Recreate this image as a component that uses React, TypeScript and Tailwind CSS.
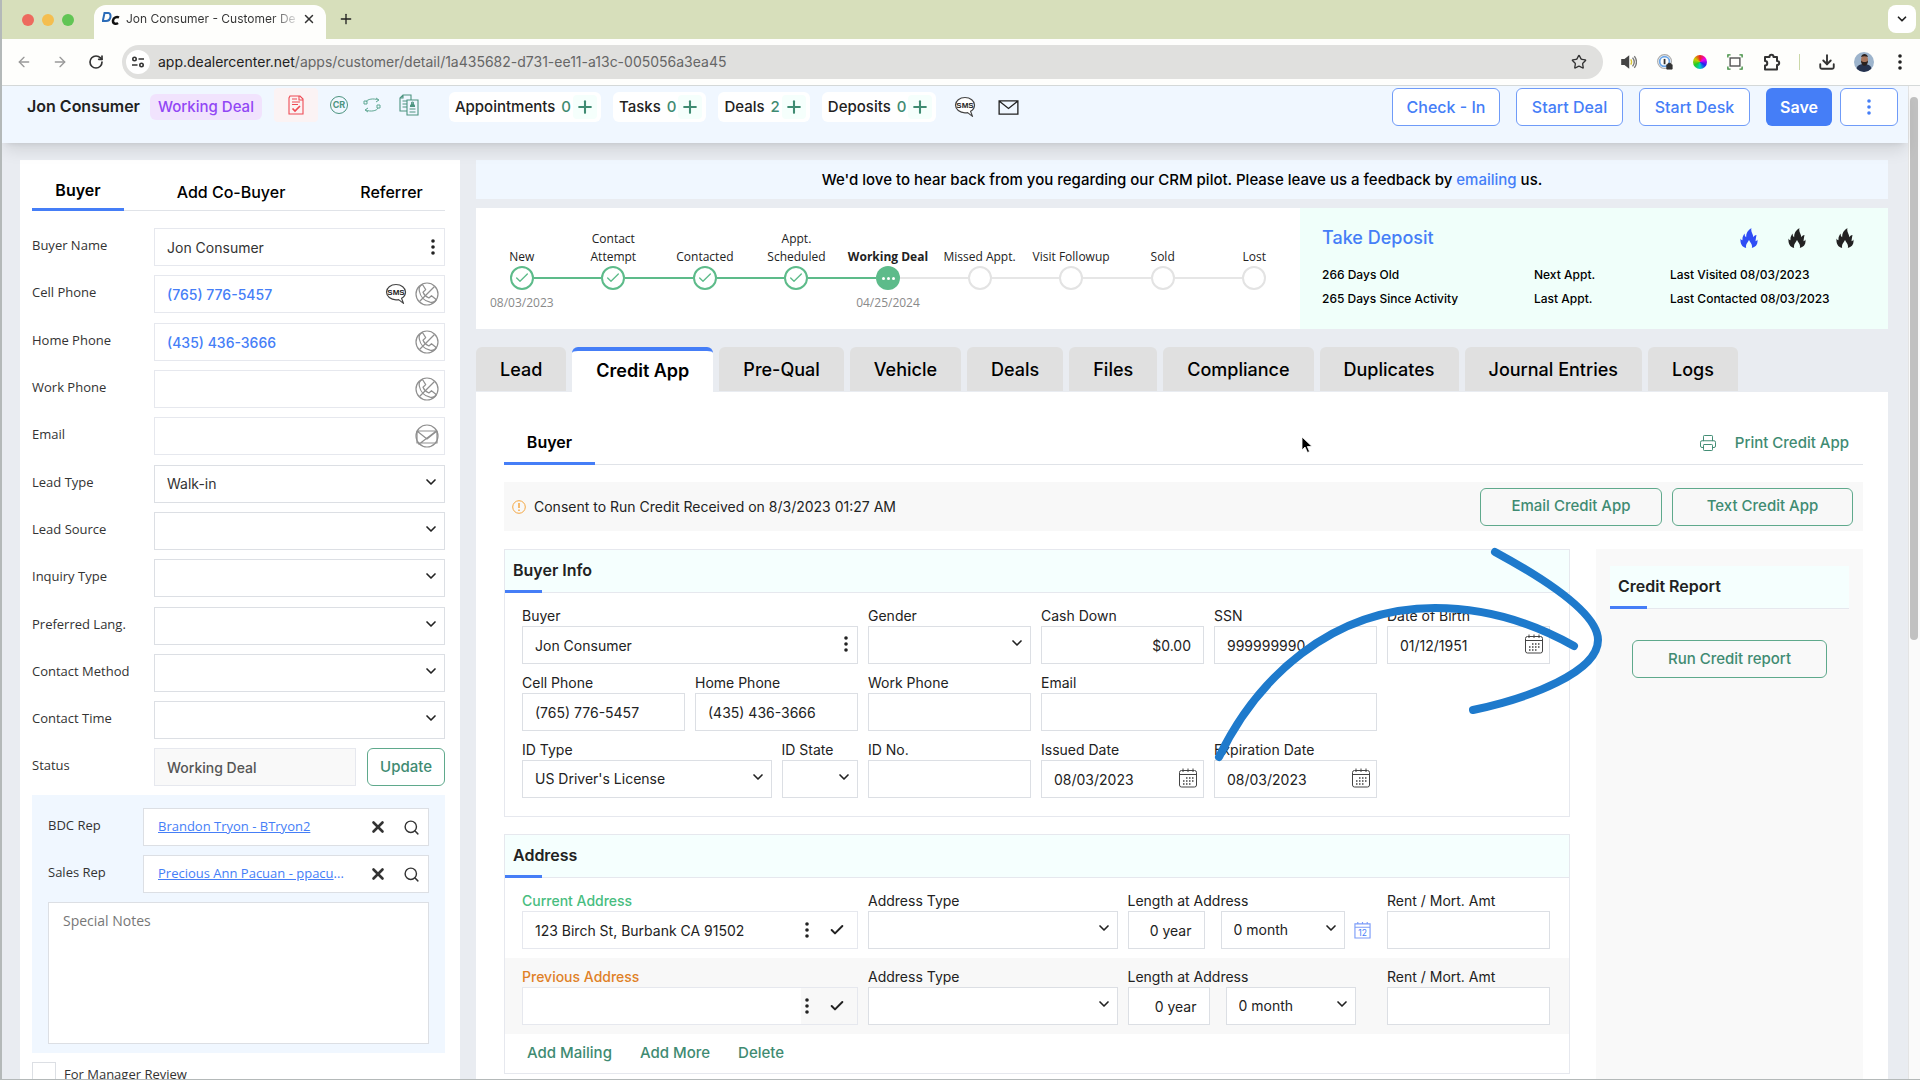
import React from 'react'
import { ArrowLeft, ArrowRight, Check, ChevronDown, Download, Plus, Printer, RotateCw, Search, Star, X } from 'lucide-react'

const iconBtn = 'flex items-center justify-center'

const Dots = ({ className = 'text-[#222]' }: { className?: string }) => (
  <svg viewBox="0 0 4 16" className={`h-4 w-1 ${className}`} fill="currentColor">
    <circle cx="2" cy="2" r="1.8" />
    <circle cx="2" cy="8" r="1.8" />
    <circle cx="2" cy="14" r="1.8" />
  </svg>
)

const SmsIcon = () => (
  <svg viewBox="0 0 22 22" className="h-[22px] w-[22px]">
    <path d="M11 1.5c5.3 0 9.5 3.3 9.5 7.6 0 2.7-1.5 5-3.9 6.3l1.9 5-4.9-3.8c-.8.2-1.7.2-2.6.2-5.300 0-9.500-3.400-9.500-7.700S5.700 1.500 11 1.500Z" fill="#fff" stroke="#444" strokeWidth="1.2" strokeLinejoin="round" />
    <text x="11" y="12" textAnchor="middle" fontSize="8" fontWeight="700" fill="#222" fontFamily="Liberation Sans, sans-serif">SMS</text>
  </svg>
)

const NoPhone = () => (
  <svg viewBox="0 0 24 24" className="h-6 w-6" fill="none" stroke="#8f8f8f" strokeWidth="1.2">
    <circle cx="12" cy="12" r="11" />
    <path d="M7.5 2.500c-2.500 1-3.800 3.200-3.200 6.500C5.300 14.500 9.500 19 15 20.200c3.300.6 5.500-.7 6.200-2.700l-4.700-3.800-2.600 2.300c-2.600-1-4.800-3.200-5.900-5.800l2.700-2.600-3.200-5.100Z" strokeLinejoin="round" />
    <path d="M19.500 4.500 4.500 19.500" />
  </svg>
)

const NoMail = () => (
  <svg viewBox="0 0 24 24" className="h-6 w-6" fill="none" stroke="#8f8f8f" strokeWidth="1.2">
    <circle cx="12" cy="12" r="11" />
    <path d="M2 7h20v12H2zM2 7l10 8 10-8M3.500 20.500 20 8" strokeLinejoin="round" />
  </svg>
)

const Flame = ({ className = 'text-[#222]' }: { className?: string }) => (
  <svg viewBox="0 0 18 20" className={`h-5 w-[18px] ${className}`} fill="currentColor">
    <path d="M11.500 0C10 .8 5.800 3.800 6.200 9.200C5 8.500 4.500 7.500 4.800 5.500C3 7.500 2.200 9.500 2.500 12.200C1.500 12 1 11.500.5 10.500C.2 14.500 1 18.500 6.200 20C5.200 17 7.500 14.800 9 12C10.500 14.800 12.800 17 11.800 20C16 19 18.300 16 17.300 11.500C16.900 12.500 16.300 13 15.500 13.200C15.800 11 16 9 16.500 7C15 7.300 13.800 8 13.300 9.200C13.300 6 10.300 3.500 11.500 0Z" />
  </svg>
)

const CalendarIcon = () => (
  <svg viewBox="0 0 20 20" className="h-5 w-5" fill="none" stroke="#444">
    <rect x="1.500" y="2.500" width="17" height="16.500" rx="2" />
    <path d="M1.500 6.500h17M5 .5v3.500M10 .5v3.500M15 .5v3.500" />
    <path d="M8 10h8M5 13h11M5 16h8" strokeWidth="1.500" strokeDasharray="1.500 1.500" />
  </svg>
)

const Caret = () => (
  <ChevronDown className="pointer-events-none absolute right-1.5 top-[9px] h-4 w-4 text-[#222]" strokeWidth={2.5} />
)

type FieldProps = {
  id: string
  label: string
  span: string
  value?: string
  kind?: 'text' | 'select' | 'date' | 'dots'
  right?: boolean
}

const Field = ({ id, label, span, value = '', kind = 'text', right }: FieldProps) => (
  <div className={span}>
    <label htmlFor={id} className="block h-5 text-sm leading-5 whitespace-nowrap">{label}</label>
    <div className="relative">
      {kind === 'select' ? (
        <>
          <select id={id} className="h-[38px] w-full appearance-none border border-[#dcdfe4] bg-white px-3 text-sm">
            <option>{value}</option>
          </select>
          <Caret />
        </>
      ) : (
        <input id={id} defaultValue={value} className={`h-[38px] w-full border border-[#dcdfe4] bg-white px-3 text-sm ${right ? 'text-right' : ''}`} />
      )}
      {kind === 'date' && <button aria-label={`Pick ${label}`} className="absolute right-1.5 top-2"><CalendarIcon /></button>}
      {kind === 'dots' && <button aria-label="Buyer options" className="absolute right-2.5 top-2.5"><Dots /></button>}
    </div>
  </div>
)

type SideRowProps = {
  id: string
  label: string
  value?: string
  link?: boolean
  select?: boolean
  children?: React.ReactNode
}

const sideLabel = "w-[122px] shrink-0 pt-[7px] font-['Open_Sans',sans-serif] text-[13px] leading-5"

const SideRow = ({ id, label, value = '', link, select, children }: SideRowProps) => (
  <div className="flex">
    <label htmlFor={id} className={sideLabel}>{label}</label>
    <div className="relative flex-1">
      {select ? (
        <>
          <select id={id} className="h-[38px] w-full appearance-none border border-[#dcdfe4] bg-white px-3 text-sm">
            <option>{value}</option>
          </select>
          <Caret />
        </>
      ) : (
        <input id={id} defaultValue={value} className={`h-[38px] w-full border border-[#e6e8ee] bg-white px-3 text-sm ${link ? 'font-medium text-[#457ef7]' : ''}`} />
      )}
      <div className="absolute right-1.5 top-[7px] flex items-center gap-2">{children}</div>
    </div>
  </div>
)

const Rep = ({ label, name, more }: { label: string, name: string, more?: string }) => (
  <div className="flex font-['Open_Sans',sans-serif] text-[13px]">
    <span className="w-[95px] shrink-0 pt-[7px] leading-5">{label}</span>
    <div className="flex h-[38px] min-w-0 flex-1 items-center border border-[#dcdfe4] bg-white pr-2 pl-3.5">
      <span className="whitespace-nowrap text-[#457ef7]"><a href="#" className="underline">{name}</a>{more}</span>
      <button aria-label={`Clear ${label}`} className="ml-auto"><X className="h-[18px] w-[18px]" strokeWidth={3.5} /></button>
      <button aria-label={`Search ${label}`} className="ml-4"><Search className="h-[17px] w-[17px]" /></button>
    </div>
  </div>
)

const CardTitle = ({ children }: { children: React.ReactNode }) => (
  <div className="relative h-[43px] border-b border-[#e6e8ee] bg-[#f5fffe] px-2">
    <h2 className="pt-2 text-base leading-6 font-semibold">{children}</h2>
    <div className="absolute -bottom-px left-0 h-[3px] w-[37px] bg-[#457ef7]" />
  </div>
)

const steps = [
  { name: 'New', date: '08/03/2023', state: 'done' },
  { name: 'Contact Attempt', wrap: true, state: 'done' },
  { name: 'Contacted', state: 'done' },
  { name: 'Appt. Scheduled', wrap: true, state: 'done' },
  { name: 'Working Deal', date: '04/25/2024', state: 'now' },
  { name: 'Missed Appt.', state: 'todo' },
  { name: 'Visit Followup', state: 'todo' },
  { name: 'Sold', state: 'todo' },
  { name: 'Lost', state: 'todo' },
]

const Stepper = () => (
  <ol className="grid grid-cols-9 bg-white pt-[22px] text-center font-['Open_Sans',sans-serif] text-xs leading-[18px]">
    {steps.map((s, i) => (
      <li key={s.name} className="flex flex-col items-center">
        <div className={`flex h-9 items-end justify-center ${s.wrap ? 'w-16' : 'whitespace-nowrap'} ${s.state === 'now' ? 'font-bold' : ''}`}>{s.name}</div>
        <div className="flex w-full items-center">
          <div className={`h-0.5 flex-1 ${i === 0 ? 'bg-transparent' : i < 5 ? 'bg-[#5dbb8a]' : 'bg-[#e6e6e6]'}`} />
          {s.state === 'done' && <div className="flex h-6 w-6 items-center justify-center rounded-full border-2 border-[#5dbb8a]"><Check className="h-4 w-4 text-[#5dbb8a]" /></div>}
          {s.state === 'now' && (
            <div className="flex h-6 w-6 items-center justify-center gap-0.5 rounded-full bg-[#5dbb8a]">
              <i className="h-[3px] w-[3px] rounded-full bg-white" />
              <i className="h-[3px] w-[3px] rounded-full bg-white" />
              <i className="h-[3px] w-[3px] rounded-full bg-white" />
            </div>
          )}
          {s.state === 'todo' && <div className="h-6 w-6 rounded-full border-2 border-[#e3e3e3]" />}
          <div className={`h-0.5 flex-1 ${i === 8 ? 'bg-transparent' : i < 4 ? 'bg-[#5dbb8a]' : 'bg-[#e6e6e6]'}`} />
        </div>
        <div className="pt-1 text-[#8a8a8a]">{s.date}</div>
      </li>
    ))}
  </ol>
)

const Browser = () => (
  <>
    <div className="flex h-[39px] shrink-0 items-end bg-[#d7dfbb]">
      <div className="flex items-center gap-2 self-center pl-5">
        <i className="h-3 w-3 rounded-full bg-[#ed6a5e]" />
        <i className="h-3 w-3 rounded-full bg-[#f4be4f]" />
        <i className="h-3 w-3 rounded-full bg-[#61c554]" />
      </div>
      <div className="ml-5 flex h-[34px] w-[232px] items-center rounded-t-xl bg-[#fefefc] pr-2.5 pb-1.5 pl-2 text-[#333]">
        <svg viewBox="0 0 18 14" className="h-3.5 w-[18px] shrink-0">
          <path d="M2.500 1h4c3 0 3 8-2.500 8H.8Z" fill="none" stroke="#2b6cb8" strokeWidth="2" />
          <path d="M17 5.500c-2-1-5.500-.5-6 3-.3 3.500 3 4 5 2.500" fill="none" stroke="#111" strokeWidth="2.5" />
        </svg>
        <span className="ml-1.5 bg-linear-to-r from-[#333] from-85% to-[#ddd] bg-clip-text text-xs whitespace-nowrap text-transparent">Jon Consumer - Customer De</span>
        <button aria-label="Close tab" className="ml-auto"><X className="h-3.5 w-3.5" strokeWidth={2.5} /></button>
      </div>
      <button aria-label="New tab" className="mb-3 ml-3"><Plus className="h-4 w-4" /></button>
      <button aria-label="Search tabs" className={`${iconBtn} mr-1 mb-1.5 ml-auto h-7 w-7 rounded-lg bg-white`}><ChevronDown className="h-3.5 w-3.5" strokeWidth={3} /></button>
    </div>
    <div className="flex h-[47px] shrink-0 items-center border-b border-[#d5d9d9] bg-[#fefefc] pr-[18px] pl-3.5 text-[#333]">
      <button aria-label="Back" className="mr-5"><ArrowLeft className="h-4 w-4 text-[#999]" /></button>
      <button aria-label="Forward" className="mr-5"><ArrowRight className="h-4 w-4 text-[#999]" /></button>
      <button aria-label="Reload"><RotateCw className="h-4 w-4" strokeWidth={2.5} /></button>
      <div className="ml-[18px] flex h-[34px] flex-1 items-center rounded-full bg-[#e0e0de] pr-4 pl-1">
        <button aria-label="Site information" className={`${iconBtn} h-6 w-6 rounded-full bg-white`}>
          <svg viewBox="0 0 14 14" className="h-3.5 w-3.5" fill="none" stroke="#333" strokeWidth="1.6">
            <circle cx="3.500" cy="4" r="1.7" />
            <path d="M7.500 4H13M1 10h5.500" />
            <circle cx="10.500" cy="10" r="1.7" />
          </svg>
        </button>
        <div role="textbox" aria-label="Address" className="ml-2 text-sm text-[#666]"><span className="text-[#222]">app.dealercenter.net</span>/apps/customer/detail/1a435682-d731-ee11-a13c-005056a3ea45</div>
        <button aria-label="Bookmark" className="ml-auto"><Star className="h-4 w-4" /></button>
      </div>
      <div className="ml-[18px] flex items-center gap-5">
        <svg viewBox="0 0 18 18" className="h-4 w-4" fill="none" stroke="#777" strokeWidth="1.5">
          <path d="M1 6.500h3L8.500 3v12L4 11.500H1z" fill="#444" stroke="#444" />
          <path d="M11 6c1.300 2 1.300 4 0 6" stroke="#d8c43a" />
          <path d="M13 4c2.300 3 2.300 7 0 10M15 2.500c3 4 3 9 0 13" />
        </svg>
        <svg viewBox="0 0 18 18" className="h-4 w-4" fill="none">
          <circle cx="8.500" cy="8.500" r="7.8" stroke="#aaa" strokeWidth="1.2" />
          <circle cx="8.500" cy="8.500" r="5.5" stroke="#6aa5e8" strokeWidth="2" />
          <path d="M8.500 5.500v6" stroke="#333" strokeWidth="2" />
          <path d="M11 12h6v5h-6zM12.500 12v-1.500h3V12" fill="#333" stroke="#333" />
        </svg>
        <i className="h-3.5 w-3.5 rounded-full bg-[conic-gradient(#e22,#e0e,#22e,#0cc,#2c2,#cc0,#e22)]" />
        <svg viewBox="0 0 18 18" className="h-4 w-4" fill="none">
          <rect x="3.500" y="4.500" width="11" height="9" stroke="#555" strokeWidth="1.6" />
          <path d="M1 4V1h3M14 1h3v3M17 14v3h-3M4 17H1v-3" stroke="#3a8a3a" strokeWidth="1.5" />
        </svg>
        <svg viewBox="0 0 18 18" className="h-[18px] w-[18px]" fill="none" stroke="#333" strokeWidth="2" strokeLinejoin="round">
          <path d="M2 4h4.500c0-3 4-3 4 0H14v4c3 0 3 4 0 4v4.500H2V12.500c3 0 3-4.500 0-4.500z" />
        </svg>
      </div>
      <div className="ml-[18px] flex items-center gap-[18px]">
        <i className="h-4 w-px bg-[#cbd8a8]" />
        <Download className="h-[18px] w-[18px]" strokeWidth={2.5} />
        <svg viewBox="0 0 20 20" className="h-5 w-5">
          <clipPath id="face"><circle cx="10" cy="10" r="10" /></clipPath>
          <g clipPath="url(#face)">
            <rect width="20" height="20" fill="#9db4cc" />
            <path d="M2 20c0-6 3-8 8-8s8 2 8 8z" fill="#26324d" />
            <ellipse cx="10.500" cy="8" rx="3.500" ry="5" fill="#a9765c" />
            <path d="M7 8.500c0 7 7 7 7 0-2 2-5 2-7 0ZM7 5c1-4 6-4 7 0-2-1-5-1-7 0Z" fill="#2b211e" />
          </g>
        </svg>
        <button aria-label="Browser menu" className="ml-1.5"><Dots /></button>
      </div>
    </div>
  </>
)

const counters = [
  ['Appointments', '0'],
  ['Tasks', '0'],
  ['Deals', '2'],
  ['Deposits', '0'],
]

const outline = 'h-[38px] rounded-md border border-[#6f9bf8] bg-white text-base font-medium text-[#457ef7]'

const Header = () => (
  <header className="z-10 flex h-[57px] shrink-0 items-start bg-[#f0f7ff] pr-2.5 pl-[25px] shadow-lg">
    <h1 className="mt-2 text-base leading-6 font-semibold whitespace-nowrap">Jon Consumer</h1>
    <span className="mt-2 ml-2.5 rounded-md bg-[#f1e3fd] px-2 text-[15px] leading-[26px] font-medium whitespace-nowrap text-[#9147f5]">Working Deal</span>
    <div className="mt-0.5 ml-3 flex items-center">
      <button aria-label="Checklist" className={`${iconBtn} h-[34px] w-11 rounded bg-[#fbf3f4]`}>
        <svg viewBox="0 0 16 20" className="h-5 w-4" fill="none" stroke="#ee4b55" strokeWidth="1.1">
          <path d="M2 1h10l3 3v15H1V3zM11 1v4h4M4 4h5M4 7h8M4 9.500h6" />
          <path d="m4.500 13.500 2.500 2.500 5-5" strokeWidth="1.7" />
        </svg>
      </button>
      <button aria-label="Credit report" className={`${iconBtn} ml-3 h-[18px] w-[18px] rounded-full border border-[#4c9480] text-[9px] font-bold text-[#4c9480]`}>CR</button>
      <button aria-label="Transfer" className="ml-[15px]">
        <svg viewBox="0 0 18 18" className="h-[18px] w-[18px]" fill="none" stroke="#5fa793">
          <path d="M3 6c1-3 8-4 12-2M13 2l3 2-3 2M15 12c-1 3-8 4-12 2M5 12l-3 2 3 2" />
          <path d="M1 5h3v3H1zM14 9h3v3h-3z" />
        </svg>
      </button>
      <button aria-label="Documents" className="ml-[18px]">
        <svg viewBox="0 0 20 22" className="h-[22px] w-5" fill="none" stroke="#4c9480" strokeWidth="1.1">
          <path d="M8 17H1V4l3-3h8v5M4 1v3H1M3.500 7H8M3.500 10H8M3.500 13H8" />
          <path d="M8 6h11v15H8zM10.500 15h6M10.500 18h6" />
          <path d="M11.500 12.500c0-3 4-3 4 0z" fill="#4c9480" />
          <circle cx="13.500" cy="9" r="1" />
        </svg>
      </button>
    </div>
    <div className="mt-1.5 ml-[30px] flex items-center gap-3">
      {counters.map(([name, n]) => (
        <div key={name} className="flex h-[30px] items-center rounded-md bg-white pr-1 pl-1.5 text-[15px] font-medium">
          {name}<span className="ml-1.5 text-[#3f8b72]">{n}</span>
          <button aria-label={`Add ${name}`} className="ml-0.5 flex h-6 w-6 items-center justify-center rounded bg-[#f5fffc]"><Plus className="h-5 w-5 text-[#3f8b72]" strokeWidth={2.5} /></button>
        </div>
      ))}
      <button aria-label="Send SMS" className="ml-1.5"><SmsIcon /></button>
      <button aria-label="Send mail" className="ml-2.5">
        <svg viewBox="0 0 22 16" className="h-[15px] w-[21px]" fill="none" stroke="#222" strokeWidth="1.4"><path d="M1 1h20v14H1zM1 1l10 8L21 1" /></svg>
      </button>
    </div>
    <div className="mt-0.5 ml-auto flex">
      <button className={`${outline} w-[108px]`}>Check - In</button>
      <button className={`${outline} ml-4 w-[107px]`}>Start Deal</button>
      <button className={`${outline} ml-4 w-[111px]`}>Start Desk</button>
      <button className="ml-4 h-[38px] w-[66px] rounded-md bg-[#457ef7] text-base font-semibold text-white">Save</button>
      <button aria-label="More actions" className={`${outline} ml-2 flex w-[58px] items-center justify-center`}><Dots className="text-[#457ef7]" /></button>
    </div>
  </header>
)

const Sidebar = () => (
  <aside className="w-[440px] shrink-0 bg-white pt-3.5 pr-[15px] pl-3 text-[#333]">
    <nav className="flex h-[37px] border-b border-[#e0e3e8] text-base font-medium text-black">
      <button className="-mb-px w-[92px] border-b-[3px] border-[#457ef7] pb-0.5 font-semibold">Buyer</button>
      <button className="w-[214px]">Add Co-Buyer</button>
      <button className="flex-1">Referrer</button>
    </nav>
    <div className="flex flex-col gap-[9px] pt-[17px]">
      <SideRow id="s-name" label="Buyer Name" value="Jon Consumer"><button aria-label="Name options" className="mt-1 mr-1"><Dots /></button></SideRow>
      <SideRow id="s-cell" label="Cell Phone" value="(765) 776-5457" link><SmsIcon /><NoPhone /></SideRow>
    </div>
    <div className="flex flex-col gap-[9px] pt-2.5">
      <SideRow id="s-home" label="Home Phone" value="(435) 436-3666" link><NoPhone /></SideRow>
      <SideRow id="s-work" label="Work Phone"><NoPhone /></SideRow>
      <SideRow id="s-email" label="Email"><NoMail /></SideRow>
    </div>
    <div className="flex flex-col gap-[9px] pt-2.5">
      <SideRow id="s-type" label="Lead Type" value="Walk-in" select />
      <SideRow id="s-source" label="Lead Source" select />
      <SideRow id="s-inq" label="Inquiry Type" select />
    </div>
    <div className="flex flex-col gap-[9px] pt-2.5">
      <SideRow id="s-lang" label="Preferred Lang." select />
      <SideRow id="s-method" label="Contact Method" select />
      <SideRow id="s-time" label="Contact Time" select />
      <div className="flex">
        <label htmlFor="s-status" className={sideLabel}>Status</label>
        <input id="s-status" readOnly defaultValue="Working Deal" className="h-[38px] min-w-0 flex-1 border border-[#e6e8ee] bg-[#f9f9f9] px-3 text-sm font-medium text-[#555]" />
        <button className="ml-[11px] h-[38px] w-[78px] rounded-md border border-[#5fa98c] text-[15px] font-medium text-[#3f8b72]">Update</button>
      </div>
    </div>
    <div className="mt-[9px] flex flex-col gap-[9px] bg-[#f0f7ff] px-4 pt-[13px] pb-[9px]">
      <Rep label="BDC Rep" name="Brandon Tryon - BTryon2" />
      <Rep label="Sales Rep" name="Precious Ann Pacuan - ppacu" more="..." />
      <textarea aria-label="Special Notes" placeholder="Special Notes" className="block h-[142px] resize-none border border-[#dcdfe4] bg-white px-3.5 py-2 font-['Open_Sans',sans-serif] text-sm placeholder:text-[#777]" />
    </div>
    <label className="mt-[9px] flex gap-2 font-['Open_Sans',sans-serif] text-[13px]">
      <input type="checkbox" className="h-6 w-6 appearance-none border border-[#dcdfe4]" />
      <span className="pt-0.5 leading-5">For Manager Review</span>
    </label>
  </aside>
)

const tabs = ['Lead', 'Credit App', 'Pre-Qual', 'Vehicle', 'Deals', 'Files', 'Compliance', 'Duplicates', 'Journal Entries', 'Logs']

const greenBtn = 'h-[38px] rounded-md border border-[#5fa98c] text-[15px] font-medium text-[#3f8b72]'

const AddressRow = ({ id, title, color, value, icon }: { id: string, title: string, color: string, value?: string, icon?: boolean }) => (
  <div className={`grid grid-cols-12 gap-x-2.5 pr-[19px] pl-[17px] ${icon ? 'h-[80px] pt-[13px]' : 'h-[76px] bg-[#f8f8f8] pt-[9px]'}`}>
    <div className="col-span-4">
      <label htmlFor={`${id}-addr`} className={`block h-5 text-sm leading-5 font-medium ${color}`}>{title}</label>
      <div className="flex h-[38px] items-center border border-[#e6e8ee]">
        <input id={`${id}-addr`} defaultValue={value} className="h-full min-w-0 flex-1 bg-white px-3 text-sm" />
        <button aria-label="Address options" className="px-1"><Dots /></button>
        <button aria-label="Verify address" className="mr-3 ml-4"><Check className="h-4 w-4" strokeWidth={3} /></button>
      </div>
    </div>
    <Field id={`${id}-type`} label="Address Type" span="col-span-3" kind="select" />
    <div className="col-span-3">
      <label htmlFor={`${id}-year`} className="block h-5 text-sm leading-5">Length at Address</label>
      <div className="flex items-center">
        <input id={`${id}-year`} defaultValue="0 year" className={`h-[38px] border border-[#dcdfe4] bg-white px-3 text-right text-sm ${icon ? 'w-[77px]' : 'w-[82px]'}`} />
        <div className={`relative ml-4 ${icon ? 'w-[124px]' : 'w-[130px]'}`}>
          <select aria-label="Months at address" className="h-[38px] w-full appearance-none border border-[#dcdfe4] bg-white px-3 text-sm"><option>0 month</option></select>
          <Caret />
        </div>
        {icon && (
          <button aria-label="Pick move-in date" className="ml-[9px]">
            <svg viewBox="0 0 18 18" className="h-[17px] w-[17px]" fill="none" stroke="#7c9cf8" strokeWidth="1.2">
              <path d="M1 2h16v15H1zM1 5.500h16M4 0v2M9 0v2M14 0v2" />
              <text x="9" y="14.500" textAnchor="middle" fontSize="9" fill="#457ef7" stroke="none">12</text>
            </svg>
          </button>
        )}
      </div>
    </div>
    <Field id={`${id}-rent`} label="Rent / Mort. Amt" span="col-span-2" />
  </div>
)

const CreditApp = () => (
  <section className="flex flex-1 flex-col bg-white pt-9 pr-[25px] pl-7 text-[#222]">
    <div className="flex h-[37px] border-b border-[#e0e3e8]">
      <button className="-mb-px w-[91px] border-b-[3px] border-[#457ef7] pb-1.5 text-base font-semibold text-black">Buyer</button>
      <button className="mr-3.5 mb-1.5 ml-auto flex items-center text-[15px] font-medium text-[#3f8b72]"><Printer className="mr-[18px] h-[18px] w-[18px]" strokeWidth={1.3} />Print Credit App</button>
    </div>
    <div className="mt-[17px] flex h-[49px] items-center bg-[#f8f8f8] pr-2.5 pl-2">
      <svg viewBox="0 0 14 14" className="h-3.5 w-3.5" fill="none" stroke="#f5a742"><circle cx="7" cy="7" r="6.3" /><path d="M7 3v5M7 9.500v1.500" strokeWidth="1.5" /></svg>
      <span className="ml-2 text-sm">Consent to Run Credit Received on 8/3/2023 01:27 AM</span>
      <button className={`${greenBtn} ml-auto w-[182px]`}>Email Credit App</button>
      <button className={`${greenBtn} ml-2.5 w-[181px]`}>Text Credit App</button>
    </div>
    <div className="relative mt-[18px] flex flex-1 gap-[26px]">
      <div className="min-w-0 flex-1">
        <div className="border border-[#e6e8ee] pb-[18px]">
          <CardTitle>Buyer Info</CardTitle>
          <div className="grid grid-cols-12 gap-x-2.5 gap-y-[9px] pt-[13px] pr-[19px] pl-[17px]">
            <Field id="f-buyer" label="Buyer" span="col-span-4" value="Jon Consumer" kind="dots" />
            <Field id="f-gender" label="Gender" span="col-span-2" kind="select" />
            <Field id="f-cash" label="Cash Down" span="col-span-2" value="$0.00" right />
            <Field id="f-ssn" label="SSN" span="col-span-2" value="999999990" />
            <Field id="f-dob" label="Date of Birth" span="col-span-2" value="01/12/1951" kind="date" />
            <Field id="f-cell" label="Cell Phone" span="col-span-2" value="(765) 776-5457" />
            <Field id="f-home" label="Home Phone" span="col-span-2" value="(435) 436-3666" />
            <Field id="f-work" label="Work Phone" span="col-span-2" />
            <Field id="f-email" label="Email" span="col-span-4" />
            <Field id="f-idtype" label="ID Type" span="col-span-3 col-start-1" value="US Driver's License" kind="select" />
            <Field id="f-idstate" label="ID State" span="col-span-1" kind="select" />
            <Field id="f-idno" label="ID No." span="col-span-2" />
            <Field id="f-issued" label="Issued Date" span="col-span-2" value="08/03/2023" kind="date" />
            <Field id="f-exp" label="Expiration Date" span="col-span-2" value="08/03/2023" kind="date" />
          </div>
        </div>
        <div className="mt-[17px] border border-[#e6e8ee]">
          <CardTitle>Address</CardTitle>
          <AddressRow id="cur" title="Current Address" color="text-[#48bd80]" value="123 Birch St, Burbank CA 91502" icon />
          <AddressRow id="prev" title="Previous Address" color="text-[#e08127]" />
          <div className="flex h-[39px] gap-7 pl-[22px] text-[15px] font-medium text-[#3f8b72]">
            <button>Add Mailing</button>
            <button>Add More</button>
            <button>Delete</button>
          </div>
        </div>
      </div>
      <div className="w-[267px] shrink-0 bg-[#f9f9f9] px-3.5 pt-[17px]">
        <CardTitle>Credit Report</CardTitle>
        <button className={`${greenBtn} mx-auto mt-[31px] block w-[195px]`}>Run Credit report</button>
      </div>
      {/* hand-drawn arrow over the form */}
      <svg viewBox="1200 540 420 230" className="pointer-events-none absolute -top-[9px] right-[243px] h-[230px] w-[420px]" fill="none" stroke="#1e7acc" strokeWidth="8" strokeLinecap="round" strokeLinejoin="round">
        <path d="M1219 757C1256 680 1330 608 1435 608C1490 608 1535 624 1574 646" />
        <path d="M1495 552C1530 571 1598 610 1598 640C1598 672 1530 698 1473 710" />
      </svg>
    </div>
  </section>
)

const App = () => {
  return (
    <div className="flex h-screen flex-col overflow-hidden border-b border-l-2 border-[#b4b9b9] font-[Inter,sans-serif] text-[#222]">
      <Browser />
      <div className="flex min-h-0 flex-1">
        <div className="flex min-w-0 flex-1 flex-col bg-[#e9ecf1]">
          <Header />
          <div className="flex min-h-0 flex-1 gap-4 pt-[17px] pr-5 pl-[18px]">
            <Sidebar />
            <main className="flex min-w-0 flex-1 flex-col">
              <p className="h-[39px] shrink-0 bg-[#f0f7ff] text-center text-[15px] leading-[39px] font-medium text-black">
                We'd love to hear back from you regarding our CRM pilot. Please leave us a feedback by <a href="#" className="text-[#457ef7]">emailing</a> us.
              </p>
              <div className="mt-[9px] grid h-[121px] shrink-0 grid-cols-[824fr_588fr]">
                <Stepper />
                <div className="bg-[#f0fffa] pr-[34px] pl-[22px] text-xs font-medium text-black">
                  <div className="flex items-center pt-4">
                    <a href="#" className="text-lg leading-7 text-[#457ef7]">Take Deposit</a>
                    <div className="ml-auto flex gap-[30px]">
                      <Flame className="text-[#2f4df5]" />
                      <Flame />
                      <Flame />
                    </div>
                  </div>
                  <div className="mt-[11px] grid grid-cols-[212px_136px_1fr] leading-6 whitespace-nowrap">
                    <span>266 Days Old</span><span>Next Appt.</span><span>Last Visited 08/03/2023</span>
                    <span>265 Days Since Activity</span><span>Last Appt.</span><span>Last Contacted 08/03/2023</span>
                  </div>
                </div>
              </div>
              <nav className="mt-[18px] flex h-[45px] shrink-0 gap-1.5 text-lg font-medium text-black">
                {tabs.map((t) => (
                  <button key={t} className={t === 'Credit App' ? 'rounded-t-md border-t-4 border-[#457ef7] bg-white px-6 pb-0.5 font-semibold' : 'mb-px rounded-t-md bg-[#e0e0e0] px-6 pt-0.5'}>{t}</button>
                ))}
              </nav>
              <CreditApp />
            </main>
          </div>
        </div>
        <div className="w-3 shrink-0 border-l border-[#e4e4e4] bg-[#fafafa] pt-[11px] pl-px">
          <div className="h-[543px] w-2 rounded-full bg-[#c1c1c1]" />
        </div>
      </div>
      <svg viewBox="0 0 12 18" className="pointer-events-none absolute top-[436px] left-[1301px] h-[18px] w-3">
        <path d="M1 1v13l3-3 2.500 5.500 2-1L6.300 10.500H11Z" fill="#000" stroke="#fff" strokeWidth=".8" />
      </svg>
    </div>
  )
}

export default App
